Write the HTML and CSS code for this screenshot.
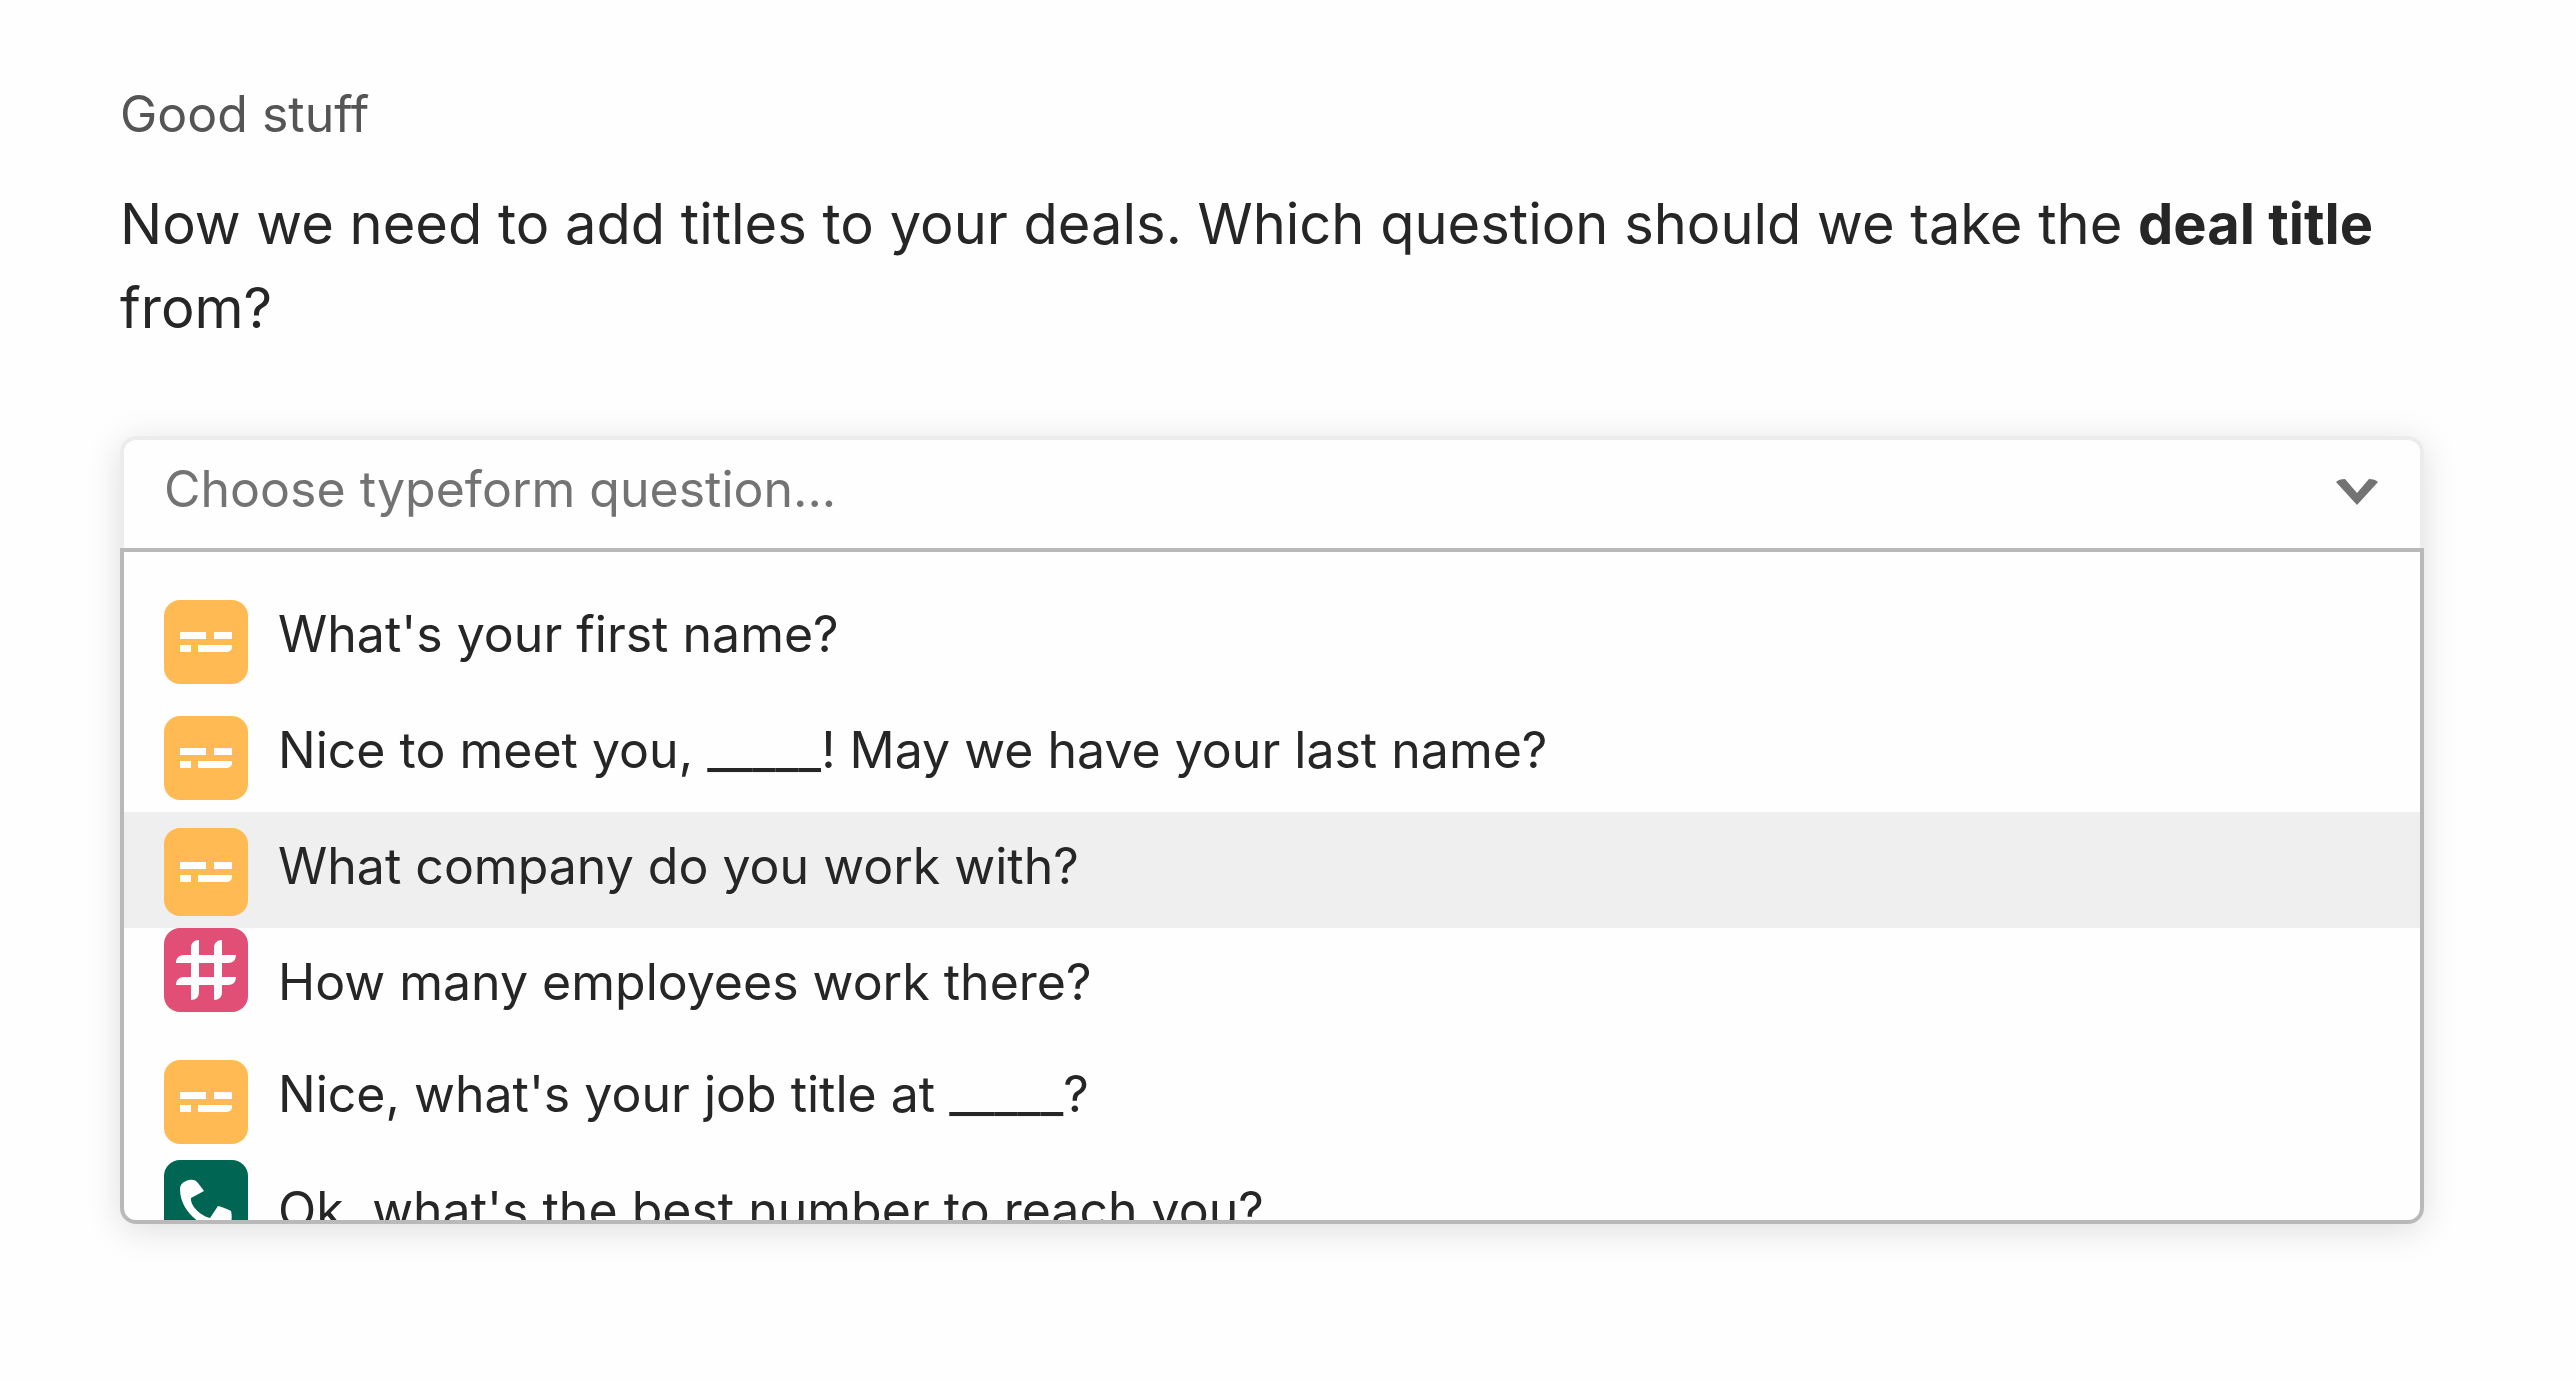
FILE: index.html
```html
<!DOCTYPE html>
<html lang="en">
<head>
<meta charset="utf-8">
<meta name="viewport" content="width=device-width, initial-scale=1">
<title>Deal title</title>
<link rel="stylesheet" href="styles.css">
</head>
<body>
<svg class="sprite" aria-hidden="true">
  <symbol id="short-text" viewBox="0 0 84 84">
    <path d="M16 32h26v7H16zM50 32h18v7H50zM16 45h11v7H16zM34 45h34v2a5 5 0 0 1-5 5H34z"/>
  </symbol>
  <symbol id="number" viewBox="0 0 84 84">
    <path d="M35 12v15h15v-7c0-5 3-8 8-8v15h14c0 5-3 8-8 8h-6v14h14c0 5-3 8-8 8h-6v7c0 5-3 8-8 8V57H35v7c0 5-3 8-8 8V57H12c0-5 3-8 8-8h7V35H12c0-5 3-8 8-8h7v-7c0-5 3-8 8-8zM35 35v14h15V35z" fill-rule="evenodd"/>
  </symbol>
  <symbol id="phone" viewBox="0 0 84 84">
    <path d="M16 29c0-5 4-8 9-9 4-1 7 0 9 3l6 8-13 7c-1 8 10 18 19 20l8-12c5 1 9 3 13 5 2 8 0 17-8 18C39 70 16 52 16 29z"/>
  </symbol>
</svg>
<main class="page">
  <p class="eyebrow">Good stuff</p>
  <h1 class="question" id="question">Now we need to add titles to your deals. Which question should we take the <strong>deal title</strong> from?</h1>
  <div class="picker">
    <div class="field">
      <input class="field-input" type="text" role="combobox" aria-expanded="true" aria-controls="options" aria-labelledby="question" placeholder="Choose typeform question...">
      <svg class="chevron" viewBox="0 0 42 26" aria-hidden="true"><path d="M0 3Q3 0 9 0L21 14 33 0Q39 0 42 3L21 26z"/></svg>
    </div>
    <ul class="options" id="options" role="listbox" aria-labelledby="question">
      <li class="option" role="option"><svg class="icon text"><use href="#short-text"/></svg><span>What's your first name?</span></li>
      <li class="option" role="option"><svg class="icon text"><use href="#short-text"/></svg><span>Nice to meet you, _____! May we have your last name?</span></li>
      <li class="option active" role="option" aria-selected="true"><svg class="icon text"><use href="#short-text"/></svg><span>What company do you work with?</span></li>
      <li class="option compact" role="option"><svg class="icon number"><use href="#number"/></svg><span>How many employees work there?</span></li>
      <li class="option" role="option"><svg class="icon text"><use href="#short-text"/></svg><span>Nice, what's your job title at _____?</span></li>
      <li class="option" role="option"><svg class="icon phone"><use href="#phone"/></svg><span>Ok, what's the best number to reach you?</span></li>
    </ul>
  </div>
</main>
</body>
</html>
```

FILE: styles.css
```css
* { box-sizing: border-box; }

body {
  margin: 0;
  background: #fefefe;
  color: #262626;
  font-family: Inter, "Liberation Sans", sans-serif;
  font-size: 50px;
}

.sprite { display: none; }

.page { padding: 78px 152px 120px 120px; }

.eyebrow {
  margin: 0 0 32px;
  color: #555;
  line-height: 72px;
}

.question {
  margin: 0 0 86px;
  font-size: 56px;
  font-weight: 400;
  line-height: 84px;
}

.question strong { font-weight: 700; }

.picker {
  border-radius: 16px;
  box-shadow: 0 6px 36px rgba(0, 0, 0, 0.13);
}

.field {
  display: flex;
  align-items: center;
  height: 112px;
  padding: 0 42px 4px 40px;
  border: 4px solid #ececec;
  border-bottom: 0;
  border-radius: 16px 16px 0 0;
  background: #fefefe;
}

.field-input {
  flex: 1;
  min-width: 0;
  height: 104px;
  padding: 0 0 6px;
  border: 0;
  outline: 0;
  background: transparent;
  color: inherit;
  font: inherit;
}

.field-input::placeholder { color: #737373; opacity: 1; }

.chevron { width: 42px; height: 26px; fill: #737373; }

.options {
  max-height: 676px;
  margin: 0;
  padding: 28px 0 0;
  overflow: hidden;
  border: 4px solid #b9b9b9;
  border-radius: 0 0 16px 16px;
  background: #fefefe;
  list-style: none;
}

.option {
  display: flex;
  align-items: flex-start;
  gap: 30px;
  height: 116px;
  padding: 0 40px;
  line-height: 108px;
  white-space: nowrap;
}

.option.active { background: #efefef; }
.option.compact { height: 112px; }

.icon {
  flex: none;
  width: 84px;
  height: 84px;
  margin-top: 20px;
  border-radius: 16px;
  fill: #fff;
}

.icon.text { background: #ffba53; }
.icon.number { margin-top: 0; background: #e14f76; }
.icon.phone { margin-top: 4px; background: #006653; }
.active .icon { height: 88px; margin-top: 16px; }
```
